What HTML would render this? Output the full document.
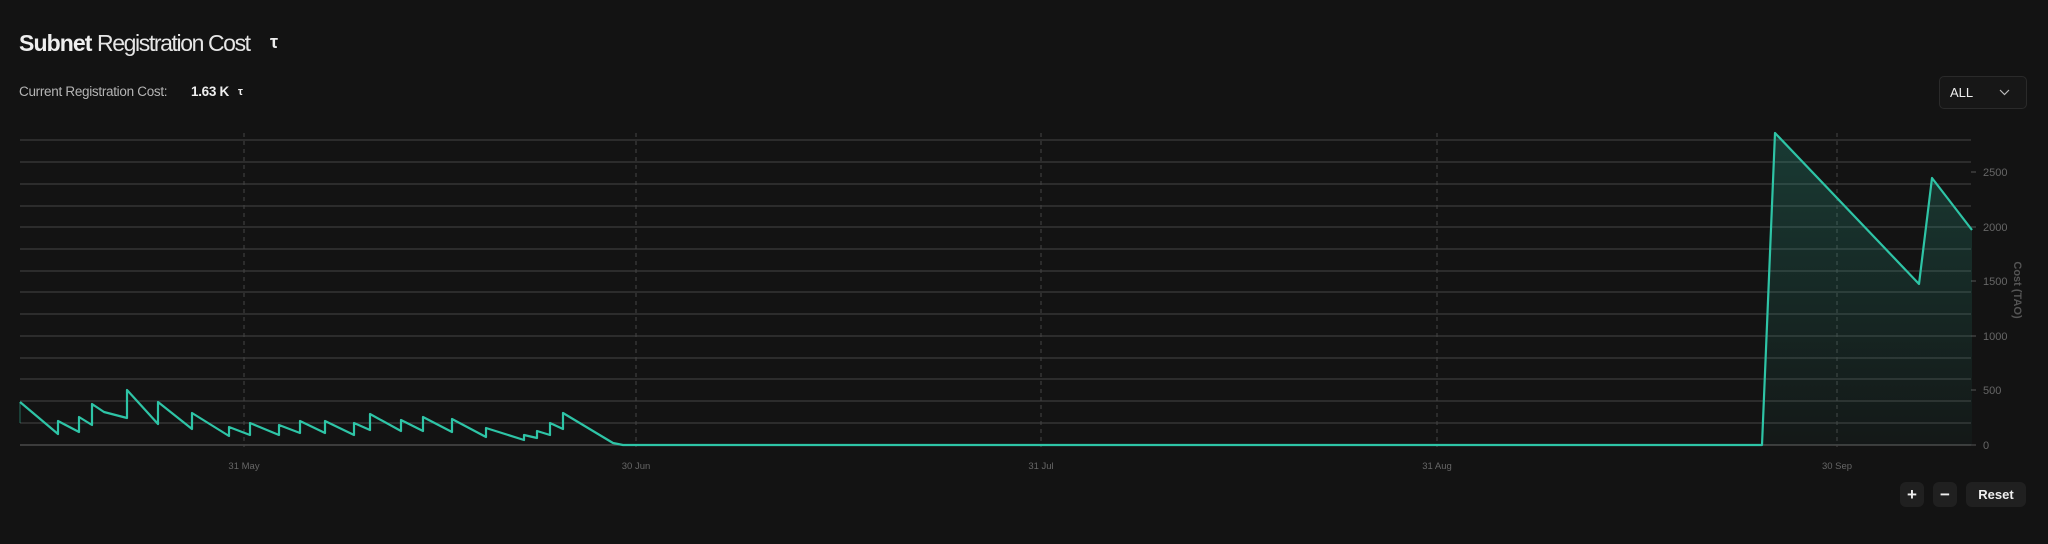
<!DOCTYPE html>
<html><head><meta charset="utf-8"><style>
html,body{margin:0;padding:0;background:#131313;width:2048px;height:544px;overflow:hidden;font-family:"Liberation Sans",sans-serif;color:#eee}
.t{position:absolute;white-space:nowrap}
.btn{position:absolute;background:#202020;border-radius:6px;color:#eee;font-weight:bold;display:flex;align-items:center;justify-content:center}
</style></head><body>
<div class="t" style="left:19px;top:30px;font-size:23px;letter-spacing:-0.9px"><b>Subnet</b> <span style="color:#e6e6e6;letter-spacing:-1.4px">Registration Cost</span></div>
<div class="t" style="left:270px;top:32px;font-size:18px;font-weight:bold">τ</div>
<div class="t" style="left:19px;top:84px;font-size:13.5px;color:#b5b5b5;letter-spacing:-0.3px">Current Registration Cost:</div>
<div class="t" style="left:191px;top:84px;font-size:13.5px;font-weight:bold;letter-spacing:-0.3px">1.63 K</div>
<div class="t" style="left:238px;top:86px;font-size:11px;font-weight:bold">τ</div>
<div style="position:absolute;left:1939px;top:76px;width:86px;height:31px;border:1px solid #2a2a2a;border-radius:5px;background:#171717"></div>
<div class="t" style="left:1950px;top:85px;font-size:13px">ALL</div>
<svg style="position:absolute;left:0;top:0" width="2048" height="544">
<defs><linearGradient id="g" x1="0" y1="0" x2="0" y2="1"><stop offset="0" stop-color="#2ec4a6" stop-opacity="0.22"/><stop offset="1" stop-color="#2ec4a6" stop-opacity="0.03"/></linearGradient></defs>
<path d="M2000 90l4.5 4.5 4.5-4.5" stroke="#bbb" fill="none" stroke-width="1.2"/>
<g stroke="#3b3b3b" stroke-width="1.2">
<line x1="20" x2="1971" y1="140" y2="140"/><line x1="20" x2="1971" y1="162" y2="162"/><line x1="20" x2="1971" y1="184" y2="184"/><line x1="20" x2="1971" y1="206" y2="206"/><line x1="20" x2="1971" y1="227" y2="227"/><line x1="20" x2="1971" y1="249" y2="249"/><line x1="20" x2="1971" y1="271" y2="271"/><line x1="20" x2="1971" y1="292" y2="292"/><line x1="20" x2="1971" y1="314" y2="314"/><line x1="20" x2="1971" y1="336" y2="336"/><line x1="20" x2="1971" y1="358" y2="358"/><line x1="20" x2="1971" y1="379" y2="379"/><line x1="20" x2="1971" y1="401" y2="401"/><line x1="20" x2="1971" y1="423" y2="423"/>
</g>
<line x1="20" x2="1971" y1="445" y2="445" stroke="#555" stroke-width="1.2"/>
<g stroke="#444" stroke-dasharray="4 4">
<line x1="244" x2="244" y1="133" y2="447"/><line x1="636" x2="636" y1="133" y2="447"/><line x1="1041" x2="1041" y1="133" y2="447"/><line x1="1437" x2="1437" y1="133" y2="447"/><line x1="1837" x2="1837" y1="133" y2="447"/>
</g>
<g stroke="#555"><line x1="1971" x2="1976" y1="172" y2="172"/><line x1="1971" x2="1976" y1="227" y2="227"/><line x1="1971" x2="1976" y1="281" y2="281"/><line x1="1971" x2="1976" y1="336" y2="336"/><line x1="1971" x2="1976" y1="390" y2="390"/><line x1="1971" x2="1976" y1="445" y2="445"/></g>
<path d="M1762 445L1775 133L1919 284L1932 178L1972 230L1972 445Z" fill="url(#g)"/>
<path d="M20 402L58 434L58 421L79 432L79 417L92 425L92 404L104 412L127 418L127 390L158 424L158 402L192 429L192 413L229 436L229 427L250 435L250 423L279 435L279 425L300 433L300 421L325 433L325 421L354 435L354 423L370 430L370 414L401 431L401 420L423 431L423 417L452 432L452 419L486 437L486 428L524 440L524 435L537 438L537 431L550 435L550 423L563 429L563 413L613 443L623 445L1762 445L1775 133L1919 284L1932 178L1972 230" fill="none" stroke="#2ec4a6" stroke-width="2.2" stroke-linejoin="round"/>
<line x1="20" x2="20" y1="402" y2="423" stroke="#2ec4a6" stroke-width="1" opacity="0.5"/>
<g fill="#666" font-size="11" font-family="Liberation Sans,sans-serif">
<text x="1983" y="176">2500</text><text x="1983" y="231">2000</text><text x="1983" y="285">1500</text><text x="1983" y="340">1000</text><text x="1983" y="394">500</text><text x="1983" y="449">0</text>
<g text-anchor="middle" font-size="9.5"><text x="244" y="469">31 May</text><text x="636" y="469">30 Jun</text><text x="1041" y="469">31 Jul</text><text x="1437" y="469">31 Aug</text><text x="1837" y="469">30 Sep</text></g>
<text transform="translate(2014,290) rotate(90)" text-anchor="middle" font-size="11" fill="#555" font-weight="bold">Cost (TAO)</text>
</g>
</svg>
<div class="btn" style="left:1900px;top:482px;width:24px;height:25px;font-size:17px">+</div>
<div class="btn" style="left:1933px;top:482px;width:24px;height:25px;font-size:17px">−</div>
<div class="btn" style="left:1966px;top:482px;width:60px;height:25px;font-size:13px">Reset</div>
</body></html>
